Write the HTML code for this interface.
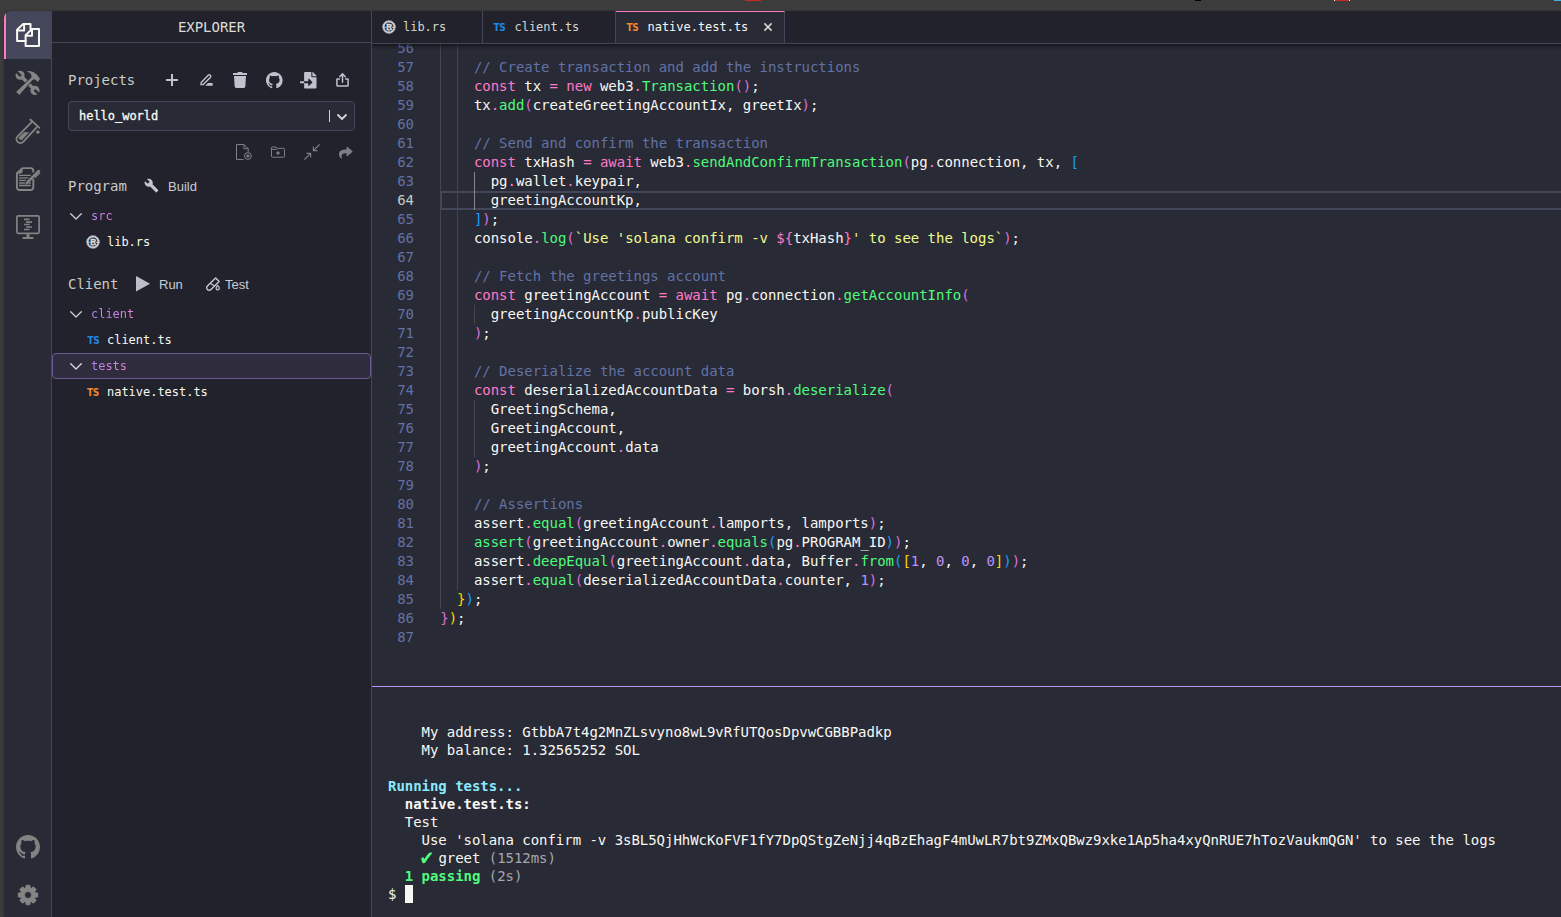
<!DOCTYPE html>
<html lang="en">
<head>
<meta charset="utf-8">
<title>Solana Playground</title>
<style>
*{box-sizing:border-box;margin:0;padding:0}
html,body{width:1561px;height:917px;overflow:hidden;background:#3c3c3c}
body{position:relative;font-family:"DejaVu Sans Mono","Liberation Mono",monospace;color:#f8f8f2;font-size:14px;letter-spacing:-0.028px}
.mark{position:absolute;top:0;height:1px}
#app{position:absolute;left:4px;top:11px;right:0;bottom:0;background:#282a36;border-top-left-radius:7px;overflow:hidden;box-shadow:0 0 2px rgba(0,0,0,.35)}
svg{display:block;position:absolute;overflow:visible}
/* icon bar */
#iconbar{position:absolute;left:0;top:0;bottom:0;width:48px;background:#282a36;border-right:1px solid #44475a}
#iconbar .sel{position:absolute;left:0;top:0;width:48px;height:48px;background:#44475a;border-left:2px solid #ff79c6}
/* sidebar */
#side{position:absolute;left:48px;top:0;bottom:0;width:320px;background:#21222c;border-right:1px solid #44475a}
#side .hdr{position:absolute;left:0;top:0;right:0;height:32px;border-bottom:1px solid #44475a;color:#dcddd9;text-align:center;line-height:33px;font-size:14px}
.abs{position:absolute;white-space:pre}
.f14{font-size:14px;line-height:19px;letter-spacing:-0.028px}
.f12{font-size:12px;line-height:16px;letter-spacing:-0.024px}
.sans{font-family:"Liberation Sans",sans-serif;font-size:13px;line-height:16px;letter-spacing:0;color:#c9ccd4}
.sec{color:#c9cac6}
.fold{background:linear-gradient(100deg,#ad88f8 0%,#e77fd2 100%);-webkit-background-clip:text;background-clip:text;color:transparent}
.tsi{position:absolute;font-family:"DejaVu Sans Condensed","DejaVu Sans","Liberation Sans",sans-serif;font-weight:bold;font-size:10px;line-height:12px;letter-spacing:-0.3px}
.selbox{position:absolute;left:16px;top:90px;width:287px;height:30px;background:#282a36;border:1px solid #44475a;border-radius:4px}
.rowsel{position:absolute;left:0;top:342px;width:319px;height:26px;background:#2f2c3e;border:1px solid #6b5a95;border-radius:4px}
/* main */
#main{position:absolute;left:368px;top:0;right:0;bottom:0;background:#282a36}
#tabs{position:absolute;left:0;top:0;right:0;height:33px;background:#21222c;border-bottom:1px solid #44475a}
.tab{position:absolute;top:0;height:32px;border-right:1px solid #44475a;font-size:12px;letter-spacing:-0.024px;color:#d5d6d2;white-space:pre}
.tab.act{background:#282a36;border-top:1px solid #ff79c6;color:#f8f8f2}
.tab span.t{position:absolute;top:8px;line-height:16px}
#editor{position:absolute;left:0;top:33px;right:0;height:642px;overflow:hidden}
#editor .shadow{position:absolute;left:0;top:0;right:0;height:6px;box-shadow:#000 0 6px 6px -6px inset;z-index:3}
.ln{position:absolute;left:0;width:42px;text-align:right;height:19px;line-height:19px;color:#6272a4;white-space:pre}
.ln.cur{color:#c9cac6}
.cl{position:absolute;left:68.300px;height:19px;line-height:19px;white-space:pre;color:#f8f8f2}
.g{position:absolute;width:1px;background:#454549}
.g.a{background:#85868a}
.curline{position:absolute;left:69px;right:0;height:19px;border:2px solid #44475a;border-right:0;border-left-width:1px}
.c{color:#6272a4}.k{color:#ff79c6}.f{color:#50fa7b}.s{color:#f1fa8c}.n{color:#bd93f9}
.b1{color:#ffd700}.b2{color:#da70d6}.b3{color:#179fff}
#term{position:absolute;left:0;top:675px;right:0;bottom:0;border-top:1px solid #bd93f9;background:#282a36}
.tl{position:absolute;left:16px;height:18px;line-height:18px;white-space:pre;color:#f8f8f2;letter-spacing:-0.035px}
.tl b{font-weight:bold}
.ck{display:inline-block;position:relative;top:0.2px;transform:scaleX(0.9);transform-origin:2px 0;width:10.8px;margin-left:-2.4px;height:18px;vertical-align:top;font-family:'DejaVu Sans',sans-serif;font-size:20px;letter-spacing:0;line-height:18px}
.cy{color:#8be9fd}.gr{color:#50fa7b}.dim{color:#a6a7ab}
</style>
</head>
<body>
<div class="mark" style="left:745px;width:16px;background:#c8281e"></div>
<div class="mark" style="left:1195px;width:6px;background:#000"></div>
<div class="mark" style="left:1334px;width:16px;background:#c8281e;border-left:1px solid #eee;border-right:1px solid #eee"></div>
<div class="mark" style="left:1554px;width:7px;background:#4aa8e8"></div>
<div id="app">
  <div id="iconbar">
    <div class="sel"></div>
    <!-- explorer (files) -->
    <svg style="left:8px;top:8px" width="32" height="32" viewBox="0 0 32 32" fill="none" stroke="#f8f8f2" stroke-width="2" stroke-linejoin="round" stroke-linecap="round"><path d="M13.6 22H5.100V10.800L11.200 4.900H18.500V10.100"/><path d="M12.100 5.200V11.400H5.400"/><path d="M13.600 16.200L19.800 10.100H27V27H13.600Z"/><path d="M20 10.400V16.800H13.900"/></svg>
    <!-- build (hammer + wrench) -->
    <svg style="left:8px;top:56px" width="32" height="32" viewBox="0 0 32 32" fill="#848484" stroke="none">
      <path d="M9.500 9.500L21.600 21.900" stroke="#848484" stroke-width="3.500" fill="none"/>
      <circle cx="8.100" cy="8.300" r="4.500"/>
      <path d="M2 2.200L8.900 9.100" stroke="#282a36" stroke-width="2.500" fill="none"/>
      <circle cx="23" cy="23.400" r="4.600"/>
      <path d="M30 30.400L22.500 22.900" stroke="#282a36" stroke-width="2.500" fill="none"/>
      <path d="M19.300 10.200L21.500 12.400L7.300 28.400L3.600 24.900Z" stroke="#282a36" stroke-width="0.900"/>
      <path d="M15.400 4.200C20 3.500 25.600 6.800 27.900 12L25.700 15.100L23.700 13.100C22.900 12.300 21.900 12.100 21.100 12.700L19.100 10.700C20.400 8.500 18.600 5.600 15.400 4.700Z"/>
    </svg>
    <!-- test tube -->
    <svg style="left:8px;top:104px" width="32" height="32" viewBox="0 0 32 32" fill="none" stroke="#848484" stroke-width="1.800" stroke-linecap="round" stroke-linejoin="round">
      <path d="M18.300 4.500L27.400 12.800"/>
      <path d="M19.700 7.200L5.600 21.400A3.850 3.850 0 0 0 11.200 26.800L24.600 12.400"/>
      <path d="M11.700 17.900C13.200 16.800 15 17.900 16.600 17.500L10.100 24.600A2.100 2.100 0 0 1 7.100 22.400Z" fill="#848484" stroke-width="0.600"/>
      <circle cx="25.800" cy="17.100" r="1.500" fill="#848484" stroke-width="0.500"/>
    </svg>
    <!-- tutorials (paper + pencil) -->
    <svg style="left:8px;top:152px" width="32" height="32" viewBox="0 0 32 32" fill="none" stroke="#848484" stroke-width="1.900" stroke-linejoin="round">
      <path d="M10.400 5.100H18.600a2.700 2.700 0 0 1 2.700 2.700V9.600M21.300 16V24.300a2.700 2.700 0 0 1-2.700 2.700H7.600a2.700 2.700 0 0 1-2.700-2.700V10.300L10.400 5.100"/>
      <path d="M10.400 5.100V8.300a2 2 0 0 1-2 2H4.900Z" fill="#848484" stroke-width="0.600"/>
      <path d="M7 12.400H18.800M7 14.900H16.400M7 17.400H14M7 20H12.900M16.700 20H18.800M7 22.500H18.800" stroke-width="1.400"/>
      <path d="M15.400 19.400L26.700 8.100" stroke-width="2.700" stroke-linecap="round"/>
      <path d="M13.700 21.200L14.300 18.900L16 20.600Z" fill="#848484" stroke-width="0.500"/>
      <path d="M23.300 14.400L27.700 10" stroke-width="1.300" stroke-linecap="round"/>
    </svg>
    <!-- programs (monitor) -->
    <svg style="left:12px;top:204px" width="24" height="24" viewBox="0 0 24 24" fill="none" stroke="#828282" stroke-width="1.7">
      <rect x="0.9" y="0.9" width="22.2" height="17.400" rx="1.200"/>
      <path d="M12 18.3V22.6" stroke-width="3"/>
      <path d="M6.6 23H17.4" stroke-width="1.9"/>
      <path d="M8 4.400h5.600M10 7.200h6M8 9.500h5.600M10 12h6M8 14.500h5.600" stroke-width="1.7"/>
    </svg>
    <!-- github -->
    <svg style="left:12px;top:824px" width="24" height="24" viewBox="0 0 16 16" fill="#828282"><path d="M8 0C3.58 0 0 3.58 0 8c0 3.54 2.29 6.53 5.47 7.59.4.07.55-.17.55-.38 0-.19-.01-.82-.01-1.49-2.01.37-2.53-.49-2.69-.94-.09-.23-.48-.94-.82-1.13-.28-.15-.68-.52-.01-.53.63-.01 1.08.58 1.23.82.72 1.21 1.87.87 2.33.66.07-.52.28-.87.51-1.07-1.78-.2-3.64-.89-3.64-3.95 0-.87.31-1.59.82-2.15-.08-.2-.36-1.02.08-2.12 0 0 .67-.21 2.2.82.64-.18 1.32-.27 2-.27.68 0 1.36.09 2 .27 1.53-1.04 2.2-.82 2.2-.82.44 1.1.16 1.92.08 2.12.51.56.82 1.27.82 2.15 0 3.07-1.87 3.75-3.65 3.95.29.25.54.73.54 1.48 0 1.07-.01 1.93-.01 2.2 0 .21.15.46.55.38A8.013 8.013 0 0016 8c0-4.42-3.58-8-8-8z"/></svg>
    <!-- settings gear -->
    <svg style="left:8px;top:868px" width="32" height="32" viewBox="0 0 32 32" fill="#848484" fill-rule="evenodd" stroke="#848484" stroke-width="0.900" stroke-linejoin="round"><path d="M14.07 6.29L17.93 6.29L18.26 8.85L19.46 9.34L21.50 7.77L24.23 10.50L22.66 12.54L23.15 13.74L25.71 14.07L25.71 17.93L23.15 18.26L22.66 19.46L24.23 21.50L21.50 24.23L19.46 22.66L18.26 23.15L17.93 25.71L14.07 25.71L13.74 23.15L12.54 22.66L10.50 24.23L7.77 21.50L9.34 19.46L8.85 18.26L6.29 17.93L6.29 14.07L8.85 13.74L9.34 12.54L7.77 10.50L10.50 7.77L12.54 9.34L13.74 8.85ZM12.5 16a3.5 3.5 0 1 0 7 0a3.5 3.5 0 1 0 -7 0Z"/></svg>
  </div>
  <div id="side">
    <div class="hdr">EXPLORER</div>
    <div class="abs f14 sec" style="left:16px;top:60px">Projects</div>
    <!-- project action icons -->
    <svg style="left:114px;top:63px" width="12" height="12" viewBox="0 0 12 12" stroke="#bfc2cc" stroke-width="2" fill="none"><path d="M6 0v12M0 6h12"/></svg>
    <svg style="left:147.5px;top:63px" width="13" height="12" viewBox="0 0 13 12" fill="none" stroke="#bfc2cc" stroke-width="1.4" stroke-linejoin="round"><path d="M1 10.6L1.2 8.6L8.2 1.3a1.45 1.45 0 0 1 2.1 2.1L3.2 10.5Z"/><path d="M5.2 11.8L8 9H12.6V11.8Z" fill="#bfc2cc" stroke="none"/></svg>
    <svg style="left:181px;top:61px" width="14" height="16" viewBox="0 0 448 512" fill="#bfc2cc"><path d="M432 32H312l-9.4-18.7A24 24 0 0 0 281.1 0H166.8a23.72 23.72 0 0 0-21.4 13.3L136 32H16A16 16 0 0 0 0 48v32a16 16 0 0 0 16 16h416a16 16 0 0 0 16-16V48a16 16 0 0 0-16-16zM53.2 467a48 48 0 0 0 47.9 45h245.8a48 48 0 0 0 47.9-45L416 128H32z"/></svg>
    <svg style="left:213.7px;top:60.8px" width="16.6" height="16.6" viewBox="0 0 16 16" fill="#bfc2cc"><path d="M8 0C3.58 0 0 3.58 0 8c0 3.54 2.29 6.53 5.47 7.59.4.07.55-.17.55-.38 0-.19-.01-.82-.01-1.49-2.01.37-2.53-.49-2.69-.94-.09-.23-.48-.94-.82-1.13-.28-.15-.68-.52-.01-.53.63-.01 1.08.58 1.23.82.72 1.21 1.87.87 2.33.66.07-.52.28-.87.51-1.07-1.78-.2-3.64-.89-3.64-3.95 0-.87.31-1.59.82-2.15-.08-.2-.36-1.02.08-2.12 0 0 .67-.21 2.2.82.64-.18 1.32-.27 2-.27.68 0 1.36.09 2 .27 1.53-1.04 2.2-.82 2.2-.82.44 1.1.16 1.92.08 2.12.51.56.82 1.27.82 2.15 0 3.07-1.87 3.75-3.65 3.95.29.25.54.73.54 1.48 0 1.07-.01 1.93-.01 2.2 0 .21.15.46.55.38A8.013 8.013 0 0016 8c0-4.42-3.58-8-8-8z"/></svg>
    <svg style="left:247.7px;top:60.8px" width="16.5" height="16.5" viewBox="0 0 512 512" fill="#bfc2cc"><path d="M16 288c-8.8 0-16 7.2-16 16v32c0 8.800 7.2 16 16 16h112v-64zm489-183L407.100 7c-4.500-4.500-10.600-7-17-7H384v128h128v-6.100c0-6.300-2.500-12.400-7-16.900zm-153 31V0H152c-13.300 0-24 10.700-24 24v264h128v-65.200c0-14.300 17.300-21.400 27.400-11.300L379 308c6.600 6.700 6.600 17.400 0 24l-95.700 96.400c-10.100 10.100-27.400 3-27.400-11.300V352H128v136c0 13.300 10.700 24 24 24h336c13.300 0 24-10.700 24-24V160H376c-13.200 0-24-10.800-24-24z"/></svg>
    <svg style="left:283.5px;top:62.3px" width="13" height="14" viewBox="0 0 13 14" fill="none" stroke="#bfc2cc" stroke-width="1.500" stroke-linejoin="round" stroke-linecap="round"><path d="M3.4 6H1.3a.4.4 0 0 0-.4.4v5.8a.9.9 0 0 0 .9.9h9.4a.9.9 0 0 0 .9-.9V6.400a.4.4 0 0 0-.4-.4H9.600"/><path d="M6.500 9.200V1.300M3.700 3.700L6.500 .9L9.300 3.700"/></svg>
    <!-- project select -->
    <div class="selbox"></div>
    <div class="abs f12" style="left:27px;top:97px;color:#fbfbf6;-webkit-text-stroke:0.3px #fbfbf6">hello_world</div>
    <div class="abs" style="left:277px;top:99px;width:1px;height:12px;background:#cfcfcf"></div>
    <svg style="left:284.700px;top:102.500px" width="10" height="6" viewBox="0 0 10 6" fill="none" stroke="#d0d0d0" stroke-width="1.9" stroke-linecap="round" stroke-linejoin="round"><path d="M1 1L5 5L9 1"/></svg>
    <!-- tree action icons -->
    <svg style="left:184px;top:133px" width="16" height="16" viewBox="0 0 16 16" fill="none" stroke="#7f8086" stroke-width="1"><path d="M7.600 15.500H.5V.5H8L12.200 4.700V8.400M8 .5V4.700H12.200"/><circle cx="11.900" cy="12" r="3.400"/><path d="M11.900 10.300v3.400M10.200 12h3.400" stroke-width="1.300"/></svg>
    <svg style="left:219px;top:135.300px" width="14" height="12" viewBox="0 0 14 12" fill="none" stroke="#7f8086" stroke-width="1"><path d="M.5 2a1 1 0 0 1 1-1H5L6.500 2.300H12.500a1 1 0 0 1 1 1V10.200a1 1 0 0 1-1 1H1.500a1 1 0 0 1-1-1Z"/><path d="M6.500 2.300L5.700 3.400H.5"/><path d="M7 5.300v3.400M5.300 7h3.400" stroke-width="1.500"/></svg>
    <svg style="left:252px;top:133px" width="16" height="16" viewBox="0 0 16 16" fill="none" stroke="#7f8086" stroke-width="1.200"><path d="M15.700.3L9.400 6.600M9.400 2.500V6.600H13.500M.3 15.700L6.600 9.400M6.600 13.500V9.400H2.500"/></svg>
    <svg style="left:287.200px;top:135px" width="13.500" height="13.500" viewBox="0 0 512 512" fill="#7f8086"><path d="M503.691 189.836L327.687 37.851C312.281 24.546 288 35.347 288 56.015v80.053C127.371 137.907 0 170.100 0 322.326c0 61.441 39.581 122.309 83.333 154.132 13.653 9.931 33.111-2.533 28.077-18.631C66.066 312.814 132.917 274.316 288 272.085V360c0 20.700 24.300 31.453 39.687 18.164l176.004-152c11.071-9.562 11.086-26.753 0-36.328z"/></svg>
    <!-- Program -->
    <div class="abs f14 sec" style="left:16px;top:166px">Program</div>
    <svg style="left:92.200px;top:166.800px" width="15" height="15" viewBox="0 0 24 24" fill="#c3c6cf"><path d="M22.700 19l-9.100-9.100c.9-2.300.4-5-1.500-6.900-2-2-5-2.400-7.400-1.300L9 6 6 9 1.600 4.700C.4 7.100.9 10.100 2.900 12.100c1.900 1.900 4.600 2.400 6.900 1.500l9.100 9.100c.4.400 1 .4 1.400 0l2.300-2.300c.5-.4.500-1.100.1-1.400z"/></svg>
    <div class="abs sans" style="left:116px;top:168px">Build</div>
    <svg style="left:18px;top:202px" width="12" height="7" viewBox="0 0 12 7" fill="none" stroke="#cfd0cc" stroke-width="1.300" stroke-linecap="round" stroke-linejoin="round"><path d="M.7.700L6 6L11.300.7"/></svg>
    <div class="abs f12" style="left:39px;top:197px"><span class="fold">src</span></div>
    <svg class="rs" style="left:34px;top:224px" width="14" height="14" viewBox="0 0 14 14"><circle cx="7" cy="7" r="6.350" fill="none" stroke="#cdcfd7" stroke-width="1" stroke-dasharray="1.050 .610"/><circle cx="7" cy="7" r="5.350" fill="none" stroke="#cdcfd7" stroke-width="1.700"/><path d="M2 7.200H4.200M9.800 7.200H12M5.200 9.800H8.400M7 10V11.600" stroke="#cdcfd7" stroke-width="1.100" fill="none"/><text x="7.100" y="9.900" text-anchor="middle" font-family="Liberation Sans,sans-serif" font-weight="bold" font-size="8.200" fill="#dfe0e6" stroke="#dfe0e6" stroke-width="0.350" letter-spacing="0">R</text></svg>
    <div class="abs f12" style="left:55px;top:223px">lib.rs</div>
    <!-- Client -->
    <div class="abs f14 sec" style="left:16px;top:264px">Client</div>
    <svg style="left:84px;top:265.400px" width="14" height="15.600" viewBox="0 0 14 15.600" fill="#bcbfc9"><path d="M0 0L14 7.800L0 15.600Z"/></svg>
    <div class="abs sans" style="left:107px;top:266px">Run</div>
    <svg style="left:154px;top:266px" width="14" height="14" viewBox="0 0 14 14" fill="none" stroke="#c8cbd4" stroke-width="1.400" stroke-linejoin="round" stroke-linecap="round"><path d="M9.640.920L13.160 4.480L4.960 12.580A2.500 2.500 0 0 1 1.440 9.020Z"/><path d="M4.600 6.400L8 8.500" stroke-width="1.200"/><path d="M11.700 8.500c.9 1.100 1.600 1.900 1.600 2.700a1.600 1.600 0 0 1-3.200 0c0-.8.700-1.600 1.600-2.700Z" stroke-width="1.200"/></svg>
    <div class="abs sans" style="left:173px;top:266px">Test</div>
    <svg style="left:18px;top:300px" width="12" height="7" viewBox="0 0 12 7" fill="none" stroke="#cfd0cc" stroke-width="1.300" stroke-linecap="round" stroke-linejoin="round"><path d="M.7.700L6 6L11.300.7"/></svg>
    <div class="abs f12" style="left:39px;top:295px"><span class="fold">client</span></div>
    <div class="tsi" style="left:35.5px;top:324px;color:#1f87e0">TS</div>
    <div class="abs f12" style="left:55px;top:321px">client.ts</div>
    <div class="rowsel"></div>
    <svg style="left:18px;top:352px" width="12" height="7" viewBox="0 0 12 7" fill="none" stroke="#dcdcdc" stroke-width="1.300" stroke-linecap="round" stroke-linejoin="round"><path d="M.7.700L6 6L11.300.7"/></svg>
    <div class="abs f12" style="left:39px;top:347px"><span class="fold">tests</span></div>
    <div class="tsi" style="left:35px;top:376px;color:#f0872a">TS</div>
    <div class="abs f12" style="left:55px;top:373px">native.test.ts</div>
  </div>
  <div id="main">
    <div id="tabs">
      <div class="tab" style="left:0;width:111px">
        <svg style="left:10px;top:9px" width="14" height="14" viewBox="0 0 14 14"><circle cx="7" cy="7" r="6.350" fill="none" stroke="#cdcfd7" stroke-width="1" stroke-dasharray="1.050 .610"/><circle cx="7" cy="7" r="5.350" fill="none" stroke="#cdcfd7" stroke-width="1.700"/><path d="M2 7.200H4.200M9.800 7.200H12M5.200 9.800H8.400M7 10V11.600" stroke="#cdcfd7" stroke-width="1.100" fill="none"/><text x="7.100" y="9.900" text-anchor="middle" font-family="Liberation Sans,sans-serif" font-weight="bold" font-size="8.200" fill="#dfe0e6" stroke="#dfe0e6" stroke-width="0.350" letter-spacing="0">R</text></svg>
        <span class="t" style="left:31px">lib.rs</span>
      </div>
      <div class="tab" style="left:111px;width:133px">
        <div class="tsi" style="left:10.500px;top:11px;color:#1f87e0">TS</div>
        <span class="t" style="left:31.500px">client.ts</span>
      </div>
      <div class="tab act" style="left:244px;width:169px">
        <div class="tsi" style="left:10.500px;top:10px;color:#f0872a">TS</div>
        <span class="t" style="left:31.500px;top:7px">native.test.ts</span>
        <svg style="left:148px;top:10.700px" width="8" height="8" viewBox="0 0 8 8" stroke="#d8d9d5" stroke-width="1.500" fill="none"><path d="M.4.400L7.600 7.600M7.600.4L.4 7.600"/></svg>
      </div>
    </div>
    <div id="editor"><div class="shadow"></div>
      <div class="curline" style="top:147px"></div>
      <div class="g" style="left:68px;top:0;height:565px"></div>
      <div class="g" style="left:85px;top:0;height:546px"></div>
      <div class="g a" style="left:102px;top:128px;height:38px"></div>
      <div class="g" style="left:102px;top:261px;height:19px"></div>
      <div class="g" style="left:102px;top:356px;height:57px"></div>
      <div class="ln" style="top:-5px">56</div>
      <div class="ln" style="top:14px">57</div><div class="cl" style="top:14px">    <span class="c">// Create transaction and add the instructions</span></div>
      <div class="ln" style="top:33px">58</div><div class="cl" style="top:33px">    <span class="k">const</span> tx <span class="k">=</span> <span class="k">new</span> web3<span class="k">.</span><span class="f">Transaction</span><span class="b2">()</span>;</div>
      <div class="ln" style="top:52px">59</div><div class="cl" style="top:52px">    tx<span class="k">.</span><span class="f">add</span><span class="b2">(</span>createGreetingAccountIx, greetIx<span class="b2">)</span>;</div>
      <div class="ln" style="top:71px">60</div>
      <div class="ln" style="top:90px">61</div><div class="cl" style="top:90px">    <span class="c">// Send and confirm the transaction</span></div>
      <div class="ln" style="top:109px">62</div><div class="cl" style="top:109px">    <span class="k">const</span> txHash <span class="k">=</span> <span class="k">await</span> web3<span class="k">.</span><span class="f">sendAndConfirmTransaction</span><span class="b2">(</span>pg<span class="k">.</span>connection, tx, <span class="b3">[</span></div>
      <div class="ln" style="top:128px">63</div><div class="cl" style="top:128px">      pg<span class="k">.</span>wallet<span class="k">.</span>keypair,</div>
      <div class="ln cur" style="top:147px">64</div><div class="cl" style="top:147px">      greetingAccountKp,</div>
      <div class="ln" style="top:166px">65</div><div class="cl" style="top:166px">    <span class="b3">]</span><span class="b2">)</span>;</div>
      <div class="ln" style="top:185px">66</div><div class="cl" style="top:185px">    console<span class="k">.</span><span class="f">log</span><span class="b2">(</span><span class="s">`Use &#x27;solana confirm -v </span><span class="k">${</span>txHash<span class="k">}</span><span class="s">&#x27; to see the logs`</span><span class="b2">)</span>;</div>
      <div class="ln" style="top:204px">67</div>
      <div class="ln" style="top:223px">68</div><div class="cl" style="top:223px">    <span class="c">// Fetch the greetings account</span></div>
      <div class="ln" style="top:242px">69</div><div class="cl" style="top:242px">    <span class="k">const</span> greetingAccount <span class="k">=</span> <span class="k">await</span> pg<span class="k">.</span>connection<span class="k">.</span><span class="f">getAccountInfo</span><span class="b2">(</span></div>
      <div class="ln" style="top:261px">70</div><div class="cl" style="top:261px">      greetingAccountKp<span class="k">.</span>publicKey</div>
      <div class="ln" style="top:280px">71</div><div class="cl" style="top:280px">    <span class="b2">)</span>;</div>
      <div class="ln" style="top:299px">72</div>
      <div class="ln" style="top:318px">73</div><div class="cl" style="top:318px">    <span class="c">// Deserialize the account data</span></div>
      <div class="ln" style="top:337px">74</div><div class="cl" style="top:337px">    <span class="k">const</span> deserializedAccountData <span class="k">=</span> borsh<span class="k">.</span><span class="f">deserialize</span><span class="b2">(</span></div>
      <div class="ln" style="top:356px">75</div><div class="cl" style="top:356px">      GreetingSchema,</div>
      <div class="ln" style="top:375px">76</div><div class="cl" style="top:375px">      GreetingAccount,</div>
      <div class="ln" style="top:394px">77</div><div class="cl" style="top:394px">      greetingAccount<span class="k">.</span>data</div>
      <div class="ln" style="top:413px">78</div><div class="cl" style="top:413px">    <span class="b2">)</span>;</div>
      <div class="ln" style="top:432px">79</div>
      <div class="ln" style="top:451px">80</div><div class="cl" style="top:451px">    <span class="c">// Assertions</span></div>
      <div class="ln" style="top:470px">81</div><div class="cl" style="top:470px">    assert<span class="k">.</span><span class="f">equal</span><span class="b2">(</span>greetingAccount<span class="k">.</span>lamports, lamports<span class="b2">)</span>;</div>
      <div class="ln" style="top:489px">82</div><div class="cl" style="top:489px">    <span class="f">assert</span><span class="b2">(</span>greetingAccount<span class="k">.</span>owner<span class="k">.</span><span class="f">equals</span><span class="b3">(</span>pg<span class="k">.</span>PROGRAM_ID<span class="b3">)</span><span class="b2">)</span>;</div>
      <div class="ln" style="top:508px">83</div><div class="cl" style="top:508px">    assert<span class="k">.</span><span class="f">deepEqual</span><span class="b2">(</span>greetingAccount<span class="k">.</span>data, Buffer<span class="k">.</span><span class="f">from</span><span class="b3">(</span><span class="b1">[</span><span class="n">1</span>, <span class="n">0</span>, <span class="n">0</span>, <span class="n">0</span><span class="b1">]</span><span class="b3">)</span><span class="b2">)</span>;</div>
      <div class="ln" style="top:527px">84</div><div class="cl" style="top:527px">    assert<span class="k">.</span><span class="f">equal</span><span class="b2">(</span>deserializedAccountData<span class="k">.</span>counter, <span class="n">1</span><span class="b2">)</span>;</div>
      <div class="ln" style="top:546px">85</div><div class="cl" style="top:546px">  <span class="b1">}</span><span class="b3">)</span>;</div>
      <div class="ln" style="top:565px">86</div><div class="cl" style="top:565px"><span class="b2">}</span><span class="b1">)</span>;</div>
      <div class="ln" style="top:584px">87</div>
    </div>
    <div id="term">
      <div class="tl" style="top:36px">    My address: GtbbA7t4g2MnZLsvyno8wL9vRfUTQosDpvwCGBBPadkp</div>
      <div class="tl" style="top:54px">    My balance: 1.32565252 SOL</div>
      <div class="tl" style="top:90px"><b class="cy">Running tests...</b></div>
      <div class="tl" style="top:108px">  <b>native.test.ts:</b></div>
      <div class="tl" style="top:126px">  Test</div>
      <div class="tl" style="top:144px">    Use 'solana confirm -v 3sBL5QjHhWcKoFVF1fY7DpQStgZeNjj4qBzEhagF4mUwLR7bt9ZMxQBwz9xke1Ap5ha4xyQnRUE7hTozVaukmQGN' to see the logs</div>
      <div class="tl" style="top:162px">    <b class="gr ck">✔</b> greet <span class="dim">(1512ms)</span></div>
      <div class="tl" style="top:180px">  <b class="gr">1 passing</b> <span class="dim">(2s)</span></div>
      <div class="tl" style="top:198px">$ </div>
      <div class="abs" style="left:32.800px;top:198px;width:8.400px;height:18px;background:#f8f8f2"></div>
    </div>
  </div>
</div>
</body>
</html>
